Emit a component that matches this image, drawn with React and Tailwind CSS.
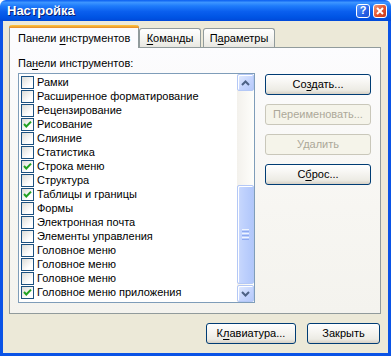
const items = [
  ["Рамки", false],
  ["Расширенное форматирование", false],
  ["Рецензирование", false],
  ["Рисование", true],
  ["Слияние", false],
  ["Статистика", false],
  ["Строка меню", true],
  ["Структура", false],
  ["Таблицы и границы", true],
  ["Формы", false],
  ["Электронная почта", false],
  ["Элементы управления", false],
  ["Головное меню", false],
  ["Головное меню", false],
  ["Головное меню", false],
  ["Головное меню приложения", true],
];

const U = ({ children }) => <span className="underline underline-offset-[2px]">{children}</span>;

const XpButton = ({ children, width = "w-[106px]", disabled }) => (
  <div
    className={`${width} h-[21px] rounded-[3px] border flex items-center justify-center ${
      disabled
        ? "border-[#c9c7ba] bg-[#f5f4ea] text-[#aca899]"
        : "border-[#003c74] bg-[linear-gradient(180deg,#ffffff_0%,#f5f4f0_45%,#ecebe4_80%,#d6d0c5_100%)] text-black"
    }`}
  >
    {children}
  </div>
);

const Check = ({ on }) => (
  <div className="w-[13px] h-[13px] border border-[#1c5180] bg-[linear-gradient(135deg,#dcdcd7_0%,#ffffff_70%)] flex items-center justify-center">
    {on && (
      <svg width="11" height="11" viewBox="0 0 11 11">
        <polyline points="2,5 4.3,7.5 9,2.6" fill="none" stroke="#21a121" strokeWidth="2" />
      </svg>
    )}
  </div>
);

const ScrollBtn = ({ up }) => (
  <div className="h-[17px] rounded-[2px] border border-[#b4c8f6] bg-[linear-gradient(135deg,#e2ebfe_0%,#c3d3fd_60%,#b6c9fa_100%)] shadow-[inset_1px_1px_0_#ffffff] flex items-center justify-center">
    <svg width="9" height="6" viewBox="0 0 9 6">
      <polyline
        points={up ? "1,5 4.5,1.5 8,5" : "1,1 4.5,4.5 8,1"}
        fill="none"
        stroke="#4d6185"
        strokeWidth="2"
      />
    </svg>
  </div>
);

export default function App() {
  return (
    <div className="w-[391px] h-[356px] flex flex-col font-['Liberation_Sans',Arial,sans-serif] text-[11px] leading-[13px] text-black select-none">
      <div className="h-[21px] flex items-center pl-[7px] pr-[4px] rounded-t-[6px] bg-[linear-gradient(180deg,#0a5ef0_0%,#3d95ff_12%,#1f7cfb_28%,#0a5fee_55%,#0055e5_80%,#0049d9_100%)]">
        <div className="flex-1 text-white font-bold text-[13px] leading-[15px] [text-shadow:1px_1px_0_#0a1e6e]">Настройка</div>
        <div className="flex gap-[3px]">
          <div className="w-[14px] h-[14px] rounded-[3px] border border-white bg-[linear-gradient(135deg,#5a9bff_0%,#2663e8_60%,#1d4fd0_100%)] flex items-center justify-center text-white font-bold text-[11px] leading-none">
            ?
          </div>
          <div className="w-[14px] h-[14px] rounded-[3px] border border-white bg-[linear-gradient(135deg,#f09b7a_0%,#e2512c_55%,#c6391b_100%)] flex items-center justify-center">
            <svg width="8" height="8" viewBox="0 0 8 8">
              <path d="M1 1 L7 7 M7 1 L1 7" stroke="#ffffff" strokeWidth="2" />
            </svg>
          </div>
        </div>
      </div>

      <div className="flex-1 flex flex-col bg-[#0a53e6] px-[3px] pb-[3px]">
        <div className="flex-1 flex flex-col bg-[#ece9d8] pl-[6px] pr-[7px] pt-[4px] pb-[9px]">
          <div className="h-[22px] flex items-end">
            <div className="relative z-10 -mb-px w-[130px] h-[23px] rounded-t-[3px] border-x border-[#919b9c] bg-[#fcfcfe] flex flex-col">
              <div className="h-[3px] rounded-t-[3px] -mx-px bg-[linear-gradient(180deg,#ffc83c_0%,#e68b2c_100%)]" />
              <div className="flex-1 flex items-center pl-[8px]">
                <span>Панели <U>и</U>нструментов</span>
              </div>
            </div>
            <div className="w-[62px] h-[19px] rounded-t-[3px] border border-b-0 border-[#919b9c] bg-[linear-gradient(180deg,#ffffff_0%,#f3f3ef_60%,#e8e7e1_100%)] flex items-center justify-center">
              <span><U>К</U>оманды</span>
            </div>
            <div className="ml-[2px] w-[72px] h-[19px] rounded-t-[3px] border border-b-0 border-[#919b9c] bg-[linear-gradient(180deg,#ffffff_0%,#f3f3ef_60%,#e8e7e1_100%)] flex items-center justify-center">
              <span>П<U>а</U>раметры</span>
            </div>
          </div>

          <div className="flex-1 border border-[#919b9c] bg-[linear-gradient(180deg,#fcfcfe_0%,#f7f6f2_60%,#f4f3ee_100%)] pl-[8px] pt-[9px]">
            <div>
              Па<U>н</U>ели инструментов:
            </div>
            <div className="mt-[3px] flex">
              <div className="w-[237px] h-[230px] border border-[#7f9db9] bg-white flex">
                <div className="flex-1 pt-px">
                  {items.map(([name, on], i) => (
                    <div key={i} className="h-[14px] flex items-center pl-[2px] gap-[3px] whitespace-nowrap">
                      <Check on={on} />
                      <span>{name}</span>
                    </div>
                  ))}
                </div>
                <div className="w-[17px] flex flex-col bg-[linear-gradient(90deg,#f3f1ec_0%,#fefefb_100%)]">
                  <ScrollBtn up />
                  <div className="flex-1" />
                  <div className="h-[99px] mb-px rounded-[2px] border border-[#b4c8f6] bg-[linear-gradient(90deg,#c9d8fd_0%,#bccffd_50%,#b1c7fb_100%)] shadow-[inset_1px_1px_0_#ffffff] flex flex-col items-center justify-center gap-[1px]">
                    <div className="w-[7px] h-px bg-[#eef4fe]" />
                    <div className="w-[7px] h-px bg-[#8faaf0]" />
                    <div className="w-[7px] h-px bg-[#eef4fe]" />
                    <div className="w-[7px] h-px bg-[#8faaf0]" />
                    <div className="w-[7px] h-px bg-[#eef4fe]" />
                    <div className="w-[7px] h-px bg-[#8faaf0]" />
                  </div>
                  <ScrollBtn />
                </div>
              </div>
              <div className="ml-[10px] mt-px flex flex-col gap-[9px]">
                <XpButton>
                  <span>Со<U>з</U>дать...</span>
                </XpButton>
                <XpButton disabled>Переименовать...</XpButton>
                <XpButton disabled>Удалить</XpButton>
                <XpButton>
                  <span>С<U>б</U>рос...</span>
                </XpButton>
              </div>
            </div>
          </div>

          <div className="mt-[9px] flex justify-end gap-[11px] pr-px">
            <XpButton width="w-[90px]">
              <span>К<U>л</U>авиатура...</span>
            </XpButton>
            <XpButton width="w-[73px]">Закрыть</XpButton>
          </div>
        </div>
      </div>
    </div>
  );
}
